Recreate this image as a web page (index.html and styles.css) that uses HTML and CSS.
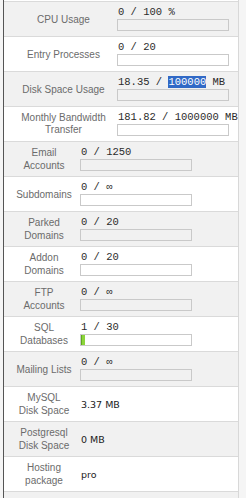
FILE: index.html
```html
<!DOCTYPE html>
<html lang="en">

<head>
    <meta charset="UTF-8">
    <meta name="viewport" content="width=device-width, initial-scale=1.0">
    <title>Account Stats</title>
    <link rel="stylesheet" href="styles.css">
</head>

<body>

    <div class="panel">
        <div class="stats stats-wide">
            <div class="stat">
                <div class="stat-label">CPU Usage</div>
                <div class="stat-value">
                    <div class="count">0 / 100 %</div>
                    <div class="bar"></div>
                </div>
            </div>
            <div class="stat">
                <div class="stat-label">Entry Processes</div>
                <div class="stat-value">
                    <div class="count">0 / 20</div>
                    <div class="bar"></div>
                </div>
            </div>
            <div class="stat">
                <div class="stat-label">Disk Space Usage</div>
                <div class="stat-value">
                    <div class="count">18.35 / <span class="selected">100000</span> MB</div>
                    <div class="bar"></div>
                </div>
            </div>
            <div class="stat">
                <div class="stat-label tight">Monthly Bandwidth<br>Transfer</div>
                <div class="stat-value">
                    <div class="count">181.82 / 1000000 MB</div>
                    <div class="bar"></div>
                </div>
            </div>
        </div>

        <div class="stats stats-narrow">
            <div class="stat">
                <div class="stat-label">Email<br>Accounts</div>
                <div class="stat-value">
                    <div class="count">0 / 1250</div>
                    <div class="bar"></div>
                </div>
            </div>
            <div class="stat">
                <div class="stat-label">Subdomains</div>
                <div class="stat-value">
                    <div class="count">0 / ∞</div>
                    <div class="bar"></div>
                </div>
            </div>
            <div class="stat">
                <div class="stat-label">Parked<br>Domains</div>
                <div class="stat-value">
                    <div class="count">0 / 20</div>
                    <div class="bar"></div>
                </div>
            </div>
            <div class="stat">
                <div class="stat-label">Addon<br>Domains</div>
                <div class="stat-value">
                    <div class="count">0 / 20</div>
                    <div class="bar"></div>
                </div>
            </div>
            <div class="stat">
                <div class="stat-label">FTP<br>Accounts</div>
                <div class="stat-value">
                    <div class="count">0 / ∞</div>
                    <div class="bar"></div>
                </div>
            </div>
            <div class="stat">
                <div class="stat-label">SQL<br>Databases</div>
                <div class="stat-value">
                    <div class="count">1 / 30</div>
                    <div class="bar"><div class="bar-fill" style="width: 3.4%"></div></div>
                </div>
            </div>
            <div class="stat">
                <div class="stat-label">Mailing Lists</div>
                <div class="stat-value">
                    <div class="count">0 / ∞</div>
                    <div class="bar"></div>
                </div>
            </div>
            <div class="stat">
                <div class="stat-label">MySQL<br>Disk Space</div>
                <div class="stat-value">
                    <div class="plain">3.37 MB</div>
                </div>
            </div>
            <div class="stat">
                <div class="stat-label">Postgresql<br>Disk Space</div>
                <div class="stat-value">
                    <div class="plain">0 MB</div>
                </div>
            </div>
            <div class="stat">
                <div class="stat-label">Hosting<br>package</div>
                <div class="stat-value">
                    <div class="plain">pro</div>
                </div>
            </div>
            <div class="stat stat-filler"></div>
        </div>
    </div>

</body>

</html>
```

FILE: styles.css
```css
html,
body {
    overflow: hidden;
}

body {
    font-family: 'Liberation Sans', Arial, sans-serif;
    margin: 0;
    padding: 0;
    background-color: #f5f5f5;
    color: #333;
}

.panel {
    box-sizing: border-box;
    width: 236px;
    min-height: 100vh;
    margin-left: 3px;
    padding-top: 1px;
    background-color: #fff;
    border-left: 1px solid #555;
    border-right: 1px solid #d8d8d8;
}

.stat {
    display: grid;
    height: 34px;
    border-top: 1px solid #dadada;
}

.stat:nth-child(odd) {
    background-color: #f1f1f1;
}

.stats-wide .stat {
    grid-template-columns: 113px 1fr;
}

.stats-narrow .stat {
    grid-template-columns: 76px 1fr;
}

.stat-filler {
    height: 6px;
}

.stat-label {
    display: flex;
    align-items: center;
    justify-content: center;
    text-align: center;
    font-size: 10px;
    line-height: 13px;
    color: #6b6b6b;
}

.stats-wide .stat-label {
    padding-left: 6px;
}

.stats-narrow .stat-label {
    padding-left: 4px;
}

.stat-label.tight {
    line-height: 12px;
}

.stat-value {
    display: flex;
    flex-direction: column;
    justify-content: center;
    min-width: 0;
}

.count {
    padding-left: 1px;
    font-family: 'Liberation Mono', 'Courier New', monospace;
    font-size: 10.5px;
    line-height: 11px;
    color: #2b2b2b;
    white-space: nowrap;
}

.selected {
    background-color: #3169c6;
    color: #fff;
}

.bar {
    box-sizing: border-box;
    width: 112px;
    height: 12px;
    margin-top: 1px;
    border: 1px solid #c9c9c9;
}

.bar-fill {
    height: 100%;
    background-color: #8bd43a;
    border-left: 1px solid #5fa81e;
    box-sizing: border-box;
}

.plain {
    padding-left: 1px;
    font-family: 'DejaVu Sans', Verdana, sans-serif;
    font-size: 9.5px;
    color: #222;
}
```
